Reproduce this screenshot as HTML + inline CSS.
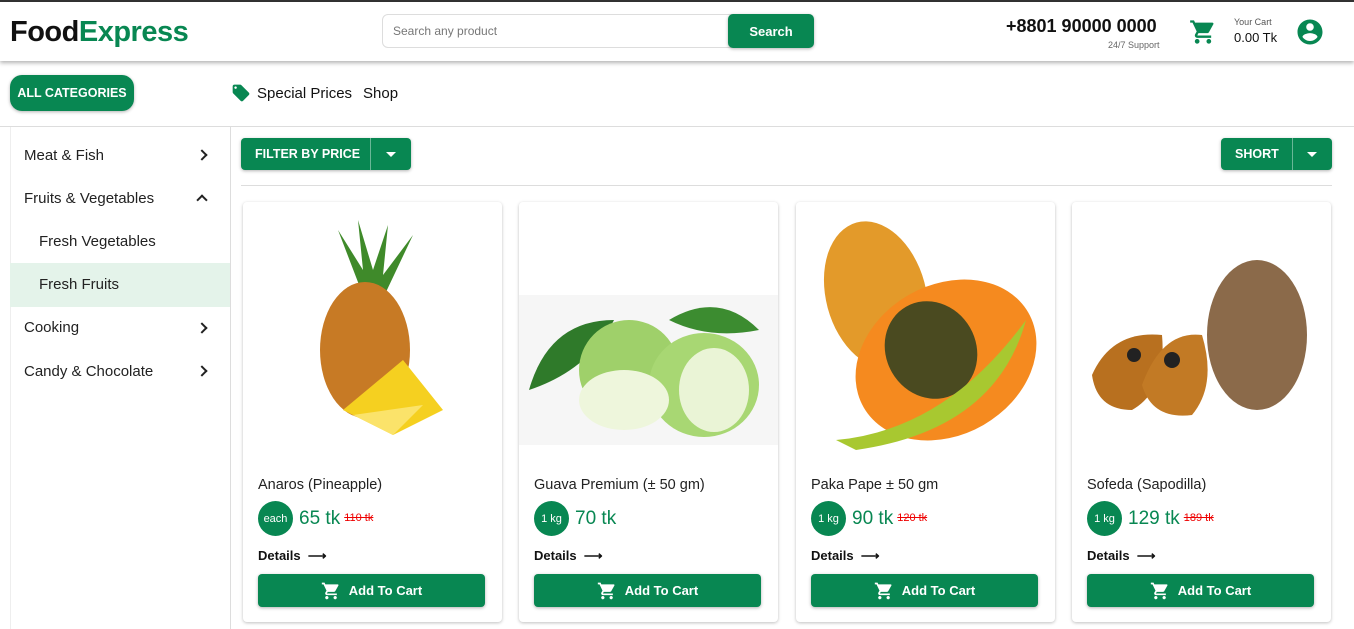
<!DOCTYPE html><html><head><meta charset="utf-8"><style>
*{box-sizing:border-box;margin:0;padding:0}
body{width:1354px;height:629px;overflow:hidden;font-family:"Liberation Sans",sans-serif;background:#fff;color:#111;position:relative}
.g{color:#088752}
.top{position:absolute;left:0;top:0;width:1354px;height:2px;background:#333}
.hdr{position:absolute;top:2px;left:0;width:1354px;height:59px;background:#fff;box-shadow:0 2px 4px rgba(0,0,0,.3)}
.abs{position:absolute}
.btn{background:#088752;color:#fff;font-weight:bold;display:flex;align-items:center;justify-content:center;border-radius:4px;box-shadow:0 1px 3px rgba(0,0,0,.3)}
.cat{position:absolute;left:24px;font-size:15px;color:#222}
.chev{position:absolute;left:198px;width:8px;height:8px;border-right:2px solid #222;border-bottom:2px solid #222}
.card{position:absolute;top:202px;width:259px;height:420px;border-radius:4px;box-shadow:0 1px 3px rgba(0,0,0,.25);background:#fff}
.card .t{position:absolute;left:15px;top:275px;font-size:14.5px;color:#222}
.card .u{position:absolute;left:15px;top:299px;width:35px;height:35px;border-radius:50%;background:#088752;color:#fff;font-size:11px;display:flex;align-items:center;justify-content:center}
.card .p{position:absolute;left:56px;top:306px;font-size:19px;color:#088752}
.card .p s{color:#e00;font-size:11px;margin-left:4px;vertical-align:3px}
.card .d{position:absolute;left:15px;top:346px;font-size:13px;font-weight:bold}
.card .b{position:absolute;left:15px;top:372px;width:227px;height:33px;font-size:13px}
.card .b svg{margin-right:8px}
.img{position:absolute;left:0;top:8px;width:259px;height:250px}
</style></head><body>
<div class="top"></div>
<div class="hdr">
<div class="abs" style="left:10px;top:14px;font-size:29px;font-weight:bold;letter-spacing:-0.5px">Food<span class="g">Express</span></div>
<div class="abs" style="left:382px;top:12px;width:430px;height:34px;border:1px solid #ddd;border-radius:6px;font-size:12px;color:#777;padding:9px 10px">Search any product</div>
<div class="abs btn" style="left:728px;top:12px;width:86px;height:34px;font-size:13px;border-radius:5px">Search</div>
<div class="abs" style="left:1006px;top:14px;font-size:18px;font-weight:bold">+8801 90000 0000</div>
<div class="abs" style="left:1108px;top:38px;font-size:9px;color:#666">24/7 Support</div>
<svg class="abs" style="left:1189px;top:16px" width="28" height="28" viewBox="0 0 24 24"><path fill="#088752" d="M7 18c-1.1 0-2 .9-2 2s.9 2 2 2 2-.9 2-2-.9-2-2-2zM1 2v2h2l3.6 7.6-1.4 2.4c-.1.3-.2.6-.2 1 0 1.1.9 2 2 2h12v-2H7.4c-.1 0-.2-.1-.2-.2v-.1l.9-1.7h7.4c.8 0 1.4-.4 1.7-1l3.6-6.5c.1-.2.2-.3.2-.5 0-.6-.4-1-1-1H5.2l-.9-2H1zm16 16c-1.1 0-2 .9-2 2s.9 2 2 2 2-.9 2-2-.9-2-2-2z"/></svg>
<div class="abs" style="left:1234px;top:15px;font-size:9px;color:#555">Your Cart</div>
<div class="abs" style="left:1234px;top:28px;font-size:13px">0.00 Tk</div>
<svg class="abs" style="left:1295px;top:15px" width="30" height="30" viewBox="0 0 24 24"><path fill="#088752" d="M12 2C6.5 2 2 6.5 2 12s4.5 10 10 10 10-4.5 10-10S17.5 2 12 2zm0 3c1.7 0 3 1.3 3 3s-1.3 3-3 3-3-1.3-3-3 1.3-3 3-3zm0 14.2c-2.5 0-4.7-1.3-6-3.2 0-2 4-3.1 6-3.1s6 1.1 6 3.1c-1.3 1.9-3.5 3.2-6 3.2z"/></svg>
</div>
<div class="abs btn" style="left:10px;top:75px;width:124px;height:36px;border-radius:12px;font-size:12.5px">ALL CATEGORIES</div>
<svg class="abs" style="left:231px;top:83px" width="20" height="20" viewBox="0 0 24 24"><path fill="#088752" d="M21.4 11.6l-9-9C12 2.2 11.5 2 11 2H4c-1.1 0-2 .9-2 2v7c0 .6.2 1.1.6 1.4l9 9c.4.4.9.6 1.4.6s1-.2 1.4-.6l7-7c.4-.4.6-.9.6-1.4s-.2-1.1-.6-1.4zM5.5 7C4.7 7 4 6.3 4 5.5S4.7 4 5.5 4 7 4.7 7 5.5 6.3 7 5.5 7z"/></svg>
<div class="abs" style="left:257px;top:85px;font-size:15px">Special Prices</div>
<div class="abs" style="left:363px;top:85px;font-size:15px">Shop</div>
<div class="abs" style="left:0;top:126px;width:1354px;height:1px;background:#ddd"></div>
<div class="abs" style="left:230px;top:127px;width:1px;height:502px;background:#ddd"></div>
<div class="abs" style="left:10px;top:127px;width:1px;height:502px;background:#eee"></div>
<div class="cat" style="top:147px">Meat &amp; Fish</div><div class="chev" style="top:151px;transform:rotate(-45deg)"></div>
<div class="cat" style="top:190px">Fruits &amp; Vegetables</div><div class="chev" style="top:196px;transform:rotate(-135deg)"></div>
<div class="cat" style="left:39px;top:233px">Fresh Vegetables</div>
<div class="abs" style="left:10px;top:263px;width:220px;height:44px;background:#e4f3ea"></div>
<div class="cat" style="left:39px;top:276px">Fresh Fruits</div>
<div class="cat" style="top:319px">Cooking</div><div class="chev" style="top:324px;transform:rotate(-45deg)"></div>
<div class="cat" style="top:363px">Candy &amp; Chocolate</div><div class="chev" style="top:367px;transform:rotate(-45deg)"></div>
<div class="abs btn" style="left:241px;top:138px;width:170px;height:32px;font-size:12.5px;justify-content:flex-start;padding-left:14px">FILTER BY PRICE<span style="position:absolute;left:129px;top:0;width:1px;height:32px;background:rgba(255,255,255,.4)"></span><span style="position:absolute;left:145px;top:14px;border:5px solid transparent;border-top-color:#fff"></span></div>
<div class="abs btn" style="left:1221px;top:138px;width:111px;height:32px;font-size:12.5px;justify-content:flex-start;padding-left:14px">SHORT<span style="position:absolute;left:71px;top:0;width:1px;height:32px;background:rgba(255,255,255,.4)"></span><span style="position:absolute;left:86px;top:14px;border:5px solid transparent;border-top-color:#fff"></span></div>
<div class="abs" style="left:241px;top:185px;width:1091px;height:1px;background:#ddd"></div>

<div class="card" style="left:243px">
<svg class="img" viewBox="0 0 259 250"><g fill="#3f8a2a"><path d="M118 80 L95 20 L120 60 L115 10 L130 60 L145 15 L140 65 L170 25 L143 82z"/></g><ellipse cx="122" cy="140" rx="45" ry="68" fill="#c77a25"/><path d="M100 200 L160 150 L200 200 L150 225z" fill="#f5d020"/><path d="M110 205 L180 195 L150 225z" fill="#fbe36a"/></svg>
<div class="t">Anaros (Pineapple)</div><div class="u">each</div><div class="p">65 tk<s>110 tk</s></div><div class="d">Details &nbsp;⟶</div><div class="btn b"><svg width="20" height="20" viewBox="0 0 24 24"><path fill="#fff" d="M7 18c-1.1 0-2 .9-2 2s.9 2 2 2 2-.9 2-2-.9-2-2-2zM1 2v2h2l3.6 7.6-1.4 2.4c-.1.3-.2.6-.2 1 0 1.1.9 2 2 2h12v-2H7.4c-.1 0-.2-.1-.2-.2v-.1l.9-1.7h7.4c.8 0 1.4-.4 1.7-1l3.6-6.5c.1-.2.2-.3.2-.5 0-.6-.4-1-1-1H5.2l-.9-2H1zm16 16c-1.1 0-2 .9-2 2s.9 2 2 2 2-.9 2-2-.9-2-2-2z"/></svg>Add To Cart</div></div>

<div class="card" style="left:519px">
<svg class="img" viewBox="0 0 259 250"><rect x="0" y="85" width="259" height="150" fill="#f6f6f6"/><path d="M10 180 Q30 110 95 110 Q70 160 10 180z" fill="#2f7a2a"/><path d="M150 110 Q200 80 240 120 Q190 130 150 110z" fill="#3c8c30"/><circle cx="110" cy="160" r="50" fill="#9fd06a"/><ellipse cx="185" cy="175" rx="55" ry="52" fill="#a8d773"/><ellipse cx="105" cy="190" rx="45" ry="30" fill="#eef6dc"/><ellipse cx="195" cy="180" rx="35" ry="42" fill="#eaf4d6"/></svg>
<div class="t">Guava Premium (± 50 gm)</div><div class="u">1 kg</div><div class="p">70 tk</div><div class="d">Details &nbsp;⟶</div><div class="btn b"><svg width="20" height="20" viewBox="0 0 24 24"><path fill="#fff" d="M7 18c-1.1 0-2 .9-2 2s.9 2 2 2 2-.9 2-2-.9-2-2-2zM1 2v2h2l3.6 7.6-1.4 2.4c-.1.3-.2.6-.2 1 0 1.1.9 2 2 2h12v-2H7.4c-.1 0-.2-.1-.2-.2v-.1l.9-1.7h7.4c.8 0 1.4-.4 1.7-1l3.6-6.5c.1-.2.2-.3.2-.5 0-.6-.4-1-1-1H5.2l-.9-2H1zm16 16c-1.1 0-2 .9-2 2s.9 2 2 2 2-.9 2-2-.9-2-2-2z"/></svg>Add To Cart</div></div>

<div class="card" style="left:796px">
<svg class="img" viewBox="0 0 259 250"><ellipse cx="80" cy="85" rx="50" ry="75" fill="#e39a2a" transform="rotate(-15 80 85)"/><ellipse cx="150" cy="150" rx="95" ry="75" fill="#f58a1f" transform="rotate(-30 150 150)"/><ellipse cx="135" cy="140" rx="45" ry="50" fill="#4a4a20" transform="rotate(-30 135 140)"/><path d="M40 230 Q150 220 230 110 Q200 220 60 240z" fill="#a8c830"/></svg>
<div class="t">Paka Pape ± 50 gm</div><div class="u">1 kg</div><div class="p">90 tk<s>120 tk</s></div><div class="d">Details &nbsp;⟶</div><div class="btn b"><svg width="20" height="20" viewBox="0 0 24 24"><path fill="#fff" d="M7 18c-1.1 0-2 .9-2 2s.9 2 2 2 2-.9 2-2-.9-2-2-2zM1 2v2h2l3.6 7.6-1.4 2.4c-.1.3-.2.6-.2 1 0 1.1.9 2 2 2h12v-2H7.4c-.1 0-.2-.1-.2-.2v-.1l.9-1.7h7.4c.8 0 1.4-.4 1.7-1l3.6-6.5c.1-.2.2-.3.2-.5 0-.6-.4-1-1-1H5.2l-.9-2H1zm16 16c-1.1 0-2 .9-2 2s.9 2 2 2 2-.9 2-2-.9-2-2-2z"/></svg>Add To Cart</div></div>

<div class="card" style="left:1072px">
<svg class="img" viewBox="0 0 259 250"><ellipse cx="185" cy="125" rx="50" ry="75" fill="#8b6a4a"/><path d="M20 165 Q40 120 90 125 Q95 180 60 200 Q25 200 20 165z" fill="#b8701f"/><path d="M70 175 Q90 120 130 125 Q145 175 120 205 Q80 210 70 175z" fill="#c27a25"/><circle cx="62" cy="145" r="7" fill="#222"/><circle cx="100" cy="150" r="8" fill="#222"/></svg>
<div class="t">Sofeda (Sapodilla)</div><div class="u">1 kg</div><div class="p">129 tk<s>189 tk</s></div><div class="d">Details &nbsp;⟶</div><div class="btn b"><svg width="20" height="20" viewBox="0 0 24 24"><path fill="#fff" d="M7 18c-1.1 0-2 .9-2 2s.9 2 2 2 2-.9 2-2-.9-2-2-2zM1 2v2h2l3.6 7.6-1.4 2.4c-.1.3-.2.6-.2 1 0 1.1.9 2 2 2h12v-2H7.4c-.1 0-.2-.1-.2-.2v-.1l.9-1.7h7.4c.8 0 1.4-.4 1.7-1l3.6-6.5c.1-.2.2-.3.2-.5 0-.6-.4-1-1-1H5.2l-.9-2H1zm16 16c-1.1 0-2 .9-2 2s.9 2 2 2 2-.9 2-2-.9-2-2-2z"/></svg>Add To Cart</div></div>
</body></html>
